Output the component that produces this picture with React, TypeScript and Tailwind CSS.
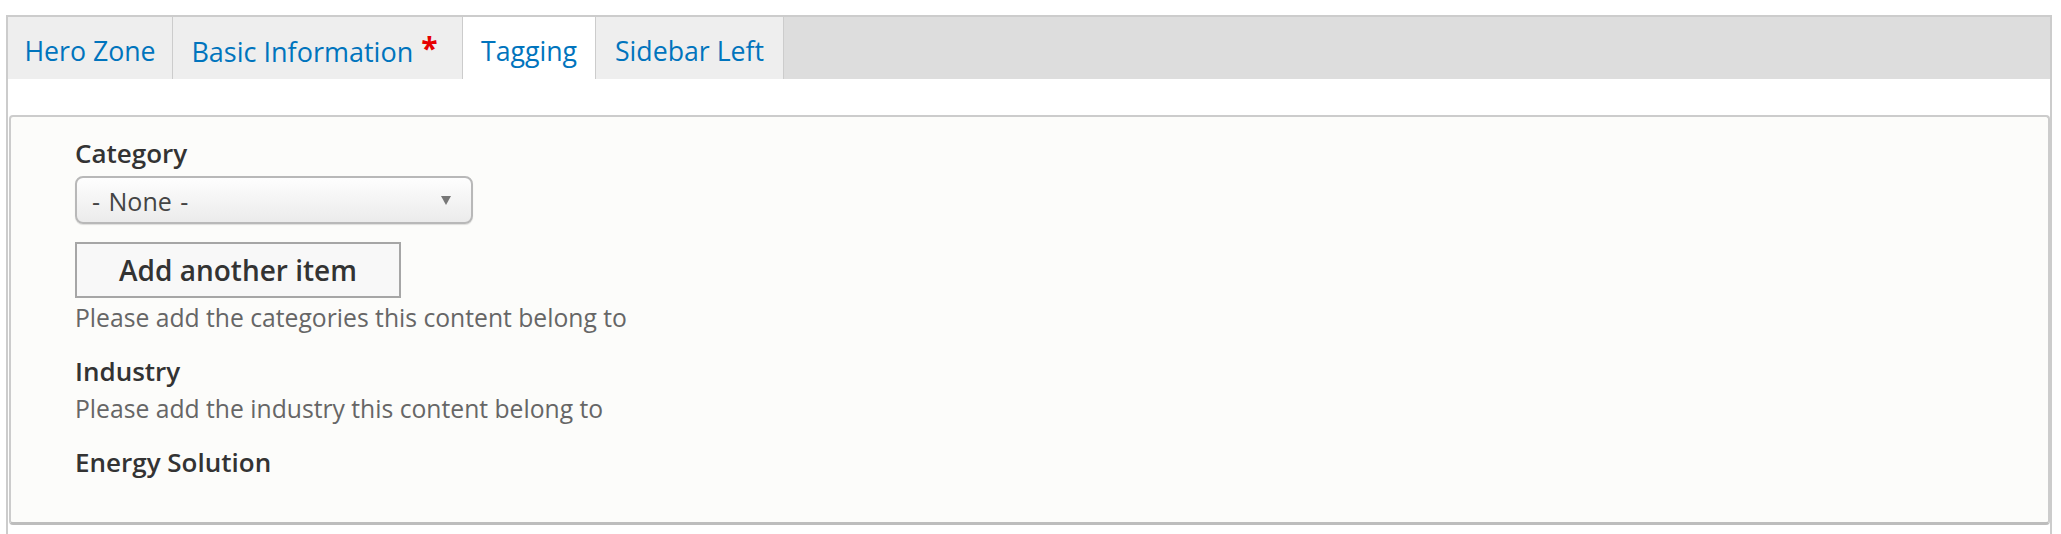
// Horizontal field-group tabs with a "Tagging" fieldset below.
function Tab({ label, active, width }: { label: string; active?: boolean; width: string }) {
  return (
    <div
      className={
        width +
        ' h-full border-r border-[#cccccc] pt-[6px] text-center text-[26.7px] leading-[56px] text-[#0074bd] ' +
        (active ? 'bg-white' : 'bg-[#eeeeee]')
      }
    >
      {label}
    </div>
  )
}

function SelectBox() {
  return (
    <div className="mt-[6px] flex h-[48px] w-[398px] items-center justify-between rounded-[8px] border-2 border-[#b8b8b8] bg-gradient-to-b from-[#fefefe] to-[#ebebeb] pl-[15px] pr-[20px] shadow-[0_1px_1px_rgba(0,0,0,0.12)]">
      <span className="pt-[1px] text-[25px] leading-[34px] text-[#444444] [word-spacing:2px]">- None -</span>
      <svg width="10" height="9" viewBox="0 0 10 9" className="text-[#777777]">
        <path d="M0 0h10L5 9z" fill="currentColor" />
      </svg>
    </div>
  )
}

export default function App() {
  return (
    <div className="min-h-screen bg-white pl-[6px] pr-[9px] pt-[15px] font-['Open_Sans',sans-serif]">
      <div className="border-x-2 border-t-2 border-[#cccccc] pb-[40px]">
        {/* Tabs */}
        <div className="flex h-[62px] bg-[#dddddd]">
          <Tab label="Hero Zone" width="w-[165px]" />
          <div className="h-full w-[290px] border-r border-[#cccccc] bg-[#eeeeee] pr-[6px] pt-[6px] text-center text-[27px] leading-[56px] text-[#0074bd]">
            <span>Basic Information</span>
            <span className="relative top-[-3px] ml-[8px] text-[30px] font-bold text-[#e60000]">*</span>
          </div>
          <Tab label="Tagging" width="w-[133px]" active />
          <Tab label="Sidebar Left" width="w-[188px]" />
        </div>

        {/* Fieldset */}
        <div className="ml-[1px] mt-[36px] rounded-[4px] border-2 border-b-[3px] border-[#cccccc] border-b-[#bdbdbd] bg-[#fcfcfa] pb-[43px] pl-[64px] pt-[19px]">
          <div className="text-[26px] font-semibold leading-[34px] text-[#333333]">Category</div>
          <SelectBox />
          <button className="mt-[18px] block h-[56px] w-[326px] border-2 border-[#a6a6a6] bg-[#f8f8f8] text-[28px] font-semibold text-[#333333]">
            Add another item
          </button>
          <div className="mt-[4px] text-[24.7px] leading-[32px] text-[#666666]">Please add the categories this content belong to</div>

          <div className="mt-[20px] text-[26px] font-semibold leading-[34px] text-[#333333]">Industry</div>
          <div className="mt-[5px] text-[24.7px] leading-[32px] text-[#666666]">Please add the industry this content belong to</div>

          <div className="mt-[20px] text-[26px] font-semibold leading-[34px] text-[#333333]">Energy Solution</div>
        </div>
      </div>
    </div>
  )
}
